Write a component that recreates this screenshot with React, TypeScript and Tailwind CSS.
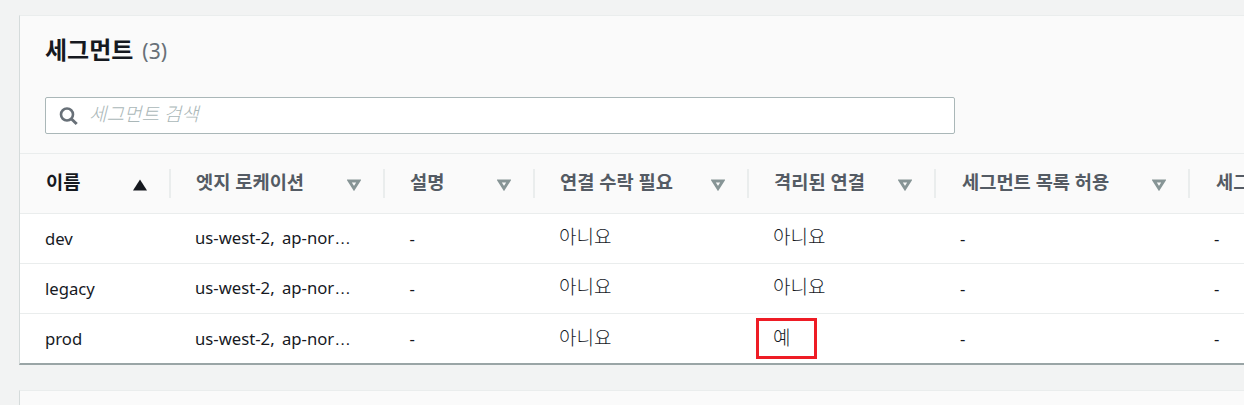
const font = { fontFamily: '"Noto Sans", "Noto Sans CJK KR", sans-serif' };

function SortDown() {
  return (
    <svg width="14" height="12" viewBox="0 0 14 12" className="shrink-0 mt-[2px]">
      <path d="M2.2 2h9.6L7 9.6z" fill="none" stroke="#879596" strokeWidth="2.8" strokeLinejoin="miter" />
    </svg>
  );
}

function SortUp() {
  return (
    <svg width="14" height="12" viewBox="0 0 14 12" className="shrink-0 mt-[2px]">
      <path d="M7 .6l7 11H0z" fill="#16191f" />
    </svg>
  );
}

const cols = [
  { w: "w-[151px]", label: "이름", pl: "pl-[26px]" },
  { w: "w-[214px]", label: "엣지 로케이션", pl: "pl-[25px]" },
  { w: "w-[150px]", label: "설명", pl: "pl-[25px]" },
  { w: "w-[214px]", label: "연결 수락 필요", pl: "pl-[25px]" },
  { w: "w-[187px]", label: "격리된 연결", pl: "pl-[25px]" },
  { w: "w-[254px]", label: "세그먼트 목록 허용", pl: "pl-[26px]" },
  { w: "w-[180px]", label: "세그먼트 공유", pl: "pl-[26px]" },
];

const rows = [
  { name: "dev", isolated: "아니요" },
  { name: "legacy", isolated: "아니요" },
  { name: "prod", isolated: "예" },
];

function Cell({ w, className = "", children }: { w: string; className?: string; children: React.ReactNode }) {
  return <div className={`${w} shrink-0 pl-[25px] pr-4 h-full flex items-center text-[16.7px] text-[#16191f] whitespace-nowrap ${className}`}>{children}</div>;
}

function Ko({ children }: { children: React.ReactNode }) {
  return <span className="text-[19px] font-light leading-none -mt-[2px]">{children}</span>;
}

export default function App() {
  return (
    <div style={font} className="w-[1244px] h-[405px] overflow-hidden bg-[#f2f3f3] pt-[15px] pl-[19px]">
      <div className="w-[1400px] h-[350px] bg-white border-l border-l-[#d5dbdb] border-b-2 border-b-[#9aa5a6] border-t border-t-[#eaeded] box-border">
        <div className="bg-[#fafafa] h-[198px] border-b border-b-[#eaeded]">
          <div className="h-[138px] border-b border-b-[#eaeded] pl-[25px]">
            <div className="h-[81px] pt-[17px]">
              <h2 className="text-[21px] leading-[34px] text-[#16191f] flex items-baseline">
                <span className="text-[24px] font-bold">세그먼트</span>
                <span className="text-[#687078] font-normal ml-[9px]">(3)</span>
              </h2>
            </div>
            <div className="w-[910px] h-[37px] bg-white border border-[#aab7b8] rounded-[2px] flex items-center pl-[13px]">
              <svg width="20" height="20" viewBox="0 0 20 20" className="shrink-0">
                <circle cx="8" cy="8.5" r="6" fill="none" stroke="#687078" strokeWidth="2.6" />
                <path d="M12.5 13l5.2 5" stroke="#687078" strokeWidth="3" fill="none" />
              </svg>
              <span className="ml-[10px] text-[19px] italic font-light text-[#aab7b8] leading-none -mt-[3px]">세그먼트 검색</span>
            </div>
          </div>
          <div className="flex h-[59px] items-center">
            {cols.map((c, i) => (
              <div
                key={c.label}
                className={`${c.w} ${c.pl} pr-[22px] shrink-0 h-[29px] flex items-center justify-between box-border ${i < 6 ? "border-r-2 border-r-[#eaeded]" : ""}`}
              >
                <span className={`text-[18.7px] leading-none -mt-[3px] font-bold whitespace-nowrap ${i === 0 ? "text-[#16191f]" : "text-[#545b64]"}`}>{c.label}</span>
                {i === 0 ? <SortUp /> : <SortDown />}
              </div>
            ))}
          </div>
        </div>
        {rows.map((r, i) => (
          <div key={r.name} className={`flex h-[50px] ${i < 2 ? "border-b border-b-[#eaeded]" : ""}`}>
            <Cell w="w-[150px]">{r.name}</Cell>
            <Cell w="w-[214px]" className="!pr-0">
              <span className="[word-spacing:3px]">us-west-2, ap-nor<span style={{ fontFamily: '"Liberation Sans", sans-serif' }}>…</span></span>
            </Cell>
            <Cell w="w-[150px]" className="!pl-[25.5px]">-</Cell>
            <Cell w="w-[214px]"><Ko>아니요</Ko></Cell>
            <div className="w-[187px] shrink-0 relative h-full pl-[25px] flex items-center text-[#16191f]">
              <Ko>{r.isolated}</Ko>
              {r.isolated === "예" && (
                <div className="absolute left-[8px] top-[4px] w-[61px] h-[41px] border-[3px] border-[#ee1c25]" />
              )}
            </div>
            <Cell w="w-[254px]">-</Cell>
            <Cell w="w-[180px]">-</Cell>
          </div>
        ))}
      </div>
      <div className="w-[1400px] h-[40px] mt-[25px] bg-[#fafafa] border-t border-t-[#eaeded] border-l border-l-[#d5dbdb]" />
    </div>
  );
}
